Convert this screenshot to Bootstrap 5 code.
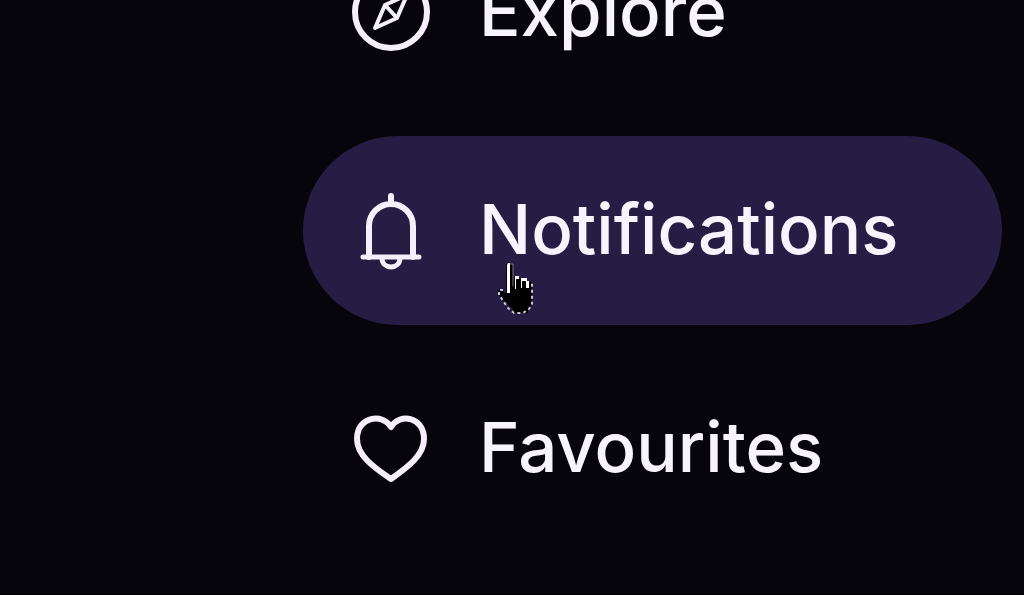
<!DOCTYPE html>
<html lang="en">
<head>
<meta charset="utf-8">
<meta name="viewport" content="width=device-width, initial-scale=1">
<title>Navigation</title>
<link href="https://cdn.jsdelivr.net/npm/bootstrap@5.3.0/dist/css/bootstrap.min.css" rel="stylesheet">
<style>
body { background: #06050b; font-family: Inter, "Open Sans", sans-serif; }
.side-menu { gap: 29px; padding: 0 22px 51px 303px; border-bottom: 1px solid #000; }
.menu-item { flex: none; height: 189px; gap: 48px; padding: 0 48px; color: #f8f4fd; font-size: 69px; line-height: 80px; font-weight: 500; white-space: nowrap; }
.menu-item:hover { color: #fff; }
.menu-item.active { background: #261d45; }
.menu-item span { padding-bottom: 4px; }
.menu-item svg { width: 80px; height: 80px; flex: none; fill: none; stroke: #f5effc; stroke-width: 6; stroke-linecap: round; stroke-linejoin: round; }
.menu-item .pointer { left: 192px; top: 126px; width: 42px; height: 56px; stroke: none; pointer-events: none; }
</style>
</head>
<body>
<nav class="side-menu vh-100 overflow-hidden d-flex flex-column justify-content-end" aria-label="Main">
  <a class="menu-item d-flex align-items-center rounded-pill text-decoration-none" href="#explore">
    <svg viewBox="0 0 80 80" aria-hidden="true"><circle cx="40" cy="39" r="36"/><path stroke-width="4" d="M24 55 34 32 56 22 46 45ZM34 32 46 45"/></svg>
    <span>Explore</span>
  </a>
  <a class="menu-item active position-relative d-flex align-items-center rounded-pill text-decoration-none" href="#notifications" aria-current="page">
    <svg viewBox="0 0 80 80" aria-hidden="true"><path d="M18 66V35A22 22 0 0 1 62 35V66M40 5V11"/><path stroke-width="5" d="M12 66H68M31 67C31 79 49 79 49 67"/></svg>
    <span>Notifications</span>
    <svg class="pointer position-absolute" viewBox="0 0 42 56" aria-hidden="true"><path fill="#000" d="M11 2H18V15H24V17H30V20H37V42L33 46V51H18V47L9 39 3 32V28H7L11 32Z"/><path fill="#fff" d="M13 1H15V31H12V3ZM20 14H24V17H21V27H20ZM26 16H32V19H34V26H31V19H27V26H26Z"/><path stroke="#77727f" stroke-width="1" d="M15 2H18V24"/><path stroke="#c9c5d0" stroke-width="2" stroke-linecap="butt" stroke-dasharray="3 3" d="M8 28H4V33L9 40 13 46 19 51H28L34 47 37 42V20"/></svg>
  </a>
  <a class="menu-item d-flex align-items-center rounded-pill text-decoration-none" href="#favourites">
    <svg viewBox="0 0 80 80" aria-hidden="true"><path d="M40 18C32 4 6 7 6 30 6 46 22 58 40 70 57 58 73 46 73 30 73 7 48 4 40 18Z"/></svg>
    <span>Favourites</span>
  </a>
</nav>
<script src="https://cdn.jsdelivr.net/npm/bootstrap@5.3.0/dist/js/bootstrap.bundle.min.js"></script>
</body>
</html>
